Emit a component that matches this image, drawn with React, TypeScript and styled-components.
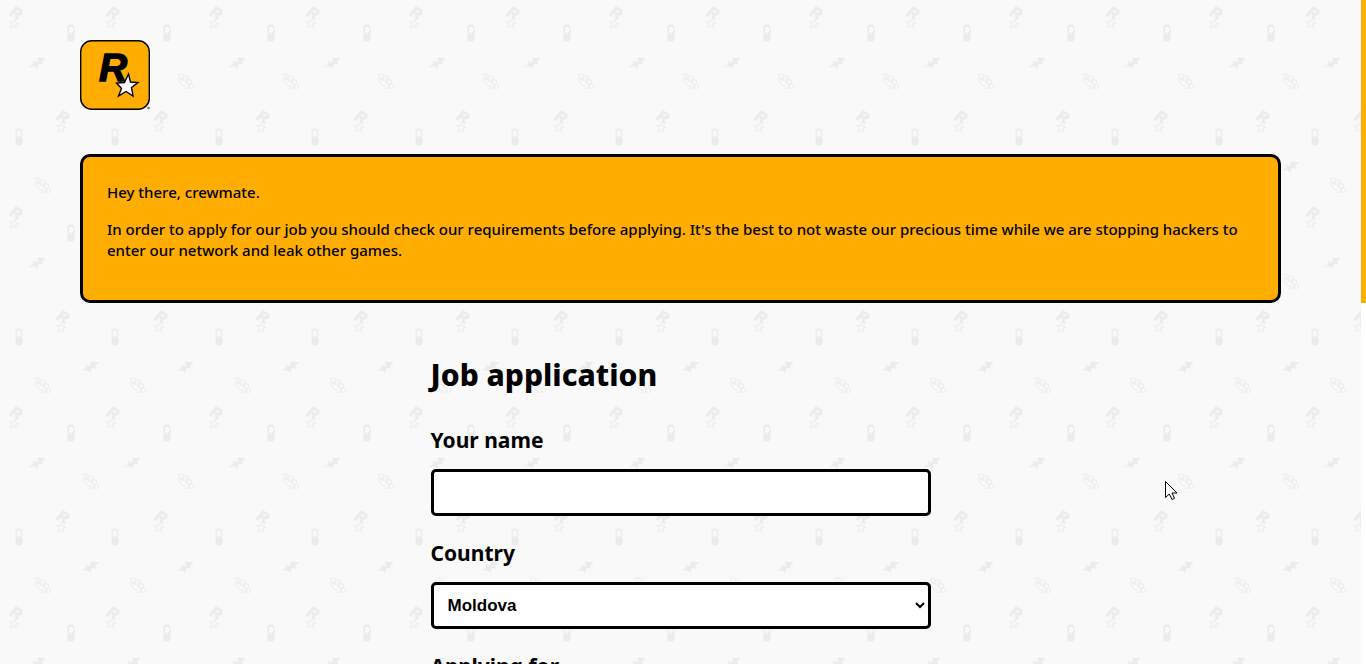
import React, { useId } from "react";
import styled, { createGlobalStyle, css } from "styled-components";

const GlobalStyle = createGlobalStyle`
  * { box-sizing: border-box; }
  body {
    margin: 0;
    background: #fff;
    color: #000;
    font-family: "Noto Sans", sans-serif;
    font-size: 15px;
    font-weight: 500;
    line-height: 21px;
  }
`;

const Shell = styled.div`
  display: grid;
  grid-template-columns: minmax(0, 1fr) 5px;
  height: 100vh;
`;

const Scroller = styled.div`
  overflow-y: auto;
  scrollbar-width: none;
  background: #f9f9f9;
`;

const Rail = styled.div`
  background: #fff;
`;

const Thumb = styled.div`
  height: 303px;
  background: #ffad00;
`;

const Page = styled.div`
  position: relative;
  isolation: isolate;
  padding: 40px 80px;
`;

const Backdrop = styled.svg`
  position: absolute;
  inset: 0;
  z-index: -1;
  width: 100%;
  height: 100%;
`;

const Header = styled.header`
  display: flex;
  padding-bottom: 43px;
`;

const LogoLink = styled.a`
  display: block;
  width: 71px;
  height: 71px;
`;

const Notice = styled.section`
  padding: 25px 24px 23px;
  border: 3px solid #000;
  border-radius: 10px;
  background: #ffad00;

  p { margin: 0 0 16px; }
`;

const Form = styled.form`
  display: flex;
  flex-direction: column;
  max-width: 500px;
  margin: 50px auto 0;
`;

const Title = styled.h1`
  margin: 0 0 28px;
  font-size: 30px;
  font-weight: 800;
  line-height: 44px;
`;

const Field = styled.div`
  display: flex;
  flex-direction: column;
  gap: 14px;
  margin-bottom: 22px;
`;

const Label = styled.label`
  font-size: 21px;
  font-weight: 700;
  line-height: 30px;
`;

const control = css`
  width: 100%;
  height: 47px;
  padding: 0 10px;
  border: 3px solid #000;
  border-radius: 5px;
  background: #fff;
  color: #000;
  font: 700 17px "Liberation Sans", Arial, sans-serif;
`;

const TextInput = styled.input`${control}`;
const Select = styled.select`${control}`;

const Pointer = styled.svg`
  position: absolute;
  left: 1165px;
  top: 481px;
  width: 13px;
  height: 20px;
`;

const STAR = "M0,-12 L2.8,-4 L12,-4 L4.5,1.5 L7.5,10.5 L0,5 L-7.5,10.5 L-4.5,1.5 L-12,-4 L-2.8,-4 Z";

type Spot = { x: number; y: number };
const letters: Spot[] = [{ x: 15, y: 17 }, { x: 112, y: 17 }, { x: 62, y: 121 }, { x: 160, y: 121 }];
const pills: Spot[] = [{ x: 71, y: 33 }, { x: 167, y: 33 }, { x: 19, y: 137 }, { x: 115, y: 137 }];
const bolts: Spot[] = [{ x: 37, y: 63 }, { x: 132, y: 63 }, { x: 90, y: 167 }, { x: 185, y: 167 }];
const knuckles: Spot[] = [{ x: 91, y: 81 }, { x: 186, y: 81 }, { x: 43, y: 185 }, { x: 138, y: 185 }];
const at = ({ x, y }: Spot) => `translate(${x} ${y})`;

function Doodles() {
  const id = useId();
  return (
    <Backdrop aria-hidden="true">
      <defs>
        <pattern id={id} width="200" height="200" patternUnits="userSpaceOnUse">
          {letters.map((s) => (
            <g key={`${s.x}-${s.y}`} transform={at(s)}>
              <text y="5" textAnchor="middle" transform="translate(1 -4) rotate(27)" fontFamily="Liberation Sans" fontWeight="700" fontStyle="italic" fontSize="15" fill="#ebebeb" stroke="#ebebeb">R</text>
              <path d={STAR} transform="translate(-1 7) rotate(10) scale(.4)" fill="#f9f9f9" stroke="#ebebeb" strokeWidth="2.2" />
            </g>
          ))}
          {pills.map((s) => (
            <g key={`${s.x}-${s.y}`} transform={at(s)}>
              <rect x="-3.5" y="-8.5" width="7" height="17" rx="3" fill="#ebebeb" />
              <rect x="-2" y="-6.5" width="4" height="6.5" rx="1.8" fill="#f9f9f9" />
            </g>
          ))}
          {bolts.map((s) => (
            <path key={`${s.x}-${s.y}`} transform={at(s)} d="M-9,4.5 L-3.5,0.5 L-5,-2 L0.500,-1 L0.500,-5.500 L9,-4.500 L4.500,-1 L6.500,1.500 L1.500,1 L0.500,5.500 L-3.500,3 Z" fill="#ebebeb" />
          ))}
          {knuckles.map((s) => (
            <g key={`${s.x}-${s.y}`} transform={at(s)} fill="none" stroke="#ebebeb">
              <circle cx="-5" cy="-5" r="2.3" />
              <circle cx="0" cy="-3" r="2.3" />
              <circle cx="3.5" cy="1" r="2.3" />
              <circle cx="5.5" cy="5.3" r="2.3" />
              <path d="M-7,-2.5 L-7,0 Q-5,5 0,6 L1,8 L3,6.5 Q2,3 -1,0 Q-4,-2 -7,-2.5 Z" />
            </g>
          ))}
        </pattern>
      </defs>
      <rect width="100%" height="100%" fill={`url(#${id})`} />
    </Backdrop>
  );
}

function Logo() {
  return (
    <svg width="71" height="71" viewBox="0 0 71 71" aria-hidden="true">
      <rect x="0.7" y="0.7" width="68.6" height="68.6" rx="11" fill="#ffad00" stroke="#000" strokeWidth="1.4" />
      <text x="19" y="41" fontFamily="Liberation Sans" fontSize="39" fontWeight="700" fontStyle="italic" stroke="#000" strokeWidth="1.4">R</text>
      <path d="M48.5,34 L50.5,42 L58,42.500 L51.500,47.500 L53,56 L46,51.500 L38.500,56 L41.500,48.500 L36.500,43 L44.500,42.500 Z" fill="#fff" stroke="#000" strokeWidth="1.4" />
      <circle cx="68.5" cy="68" r="1.3" fill="#777" />
    </svg>
  );
}

export default function App() {
  return (
    <>
      <GlobalStyle />
      <Shell>
        <Scroller>
          <Page>
            <Doodles />
            <Header>
              <LogoLink href="#" aria-label="Home"><Logo /></LogoLink>
            </Header>
            <main>
              <Notice>
                <p>Hey there, crewmate.</p>
                <p>In order to apply for our job you should check our requirements before applying. It's the best to not waste our precious time while we are stopping hackers to enter our network and leak other games.</p>
              </Notice>
              <Form>
                <Title>Job application</Title>
                <Field>
                  <Label htmlFor="name">Your name</Label>
                  <TextInput id="name" type="text" />
                </Field>
                <Field>
                  <Label htmlFor="country">Country</Label>
                  <Select id="country" defaultValue="Moldova"><option>Moldova</option></Select>
                </Field>
                <Field>
                  <Label htmlFor="role">Applying for</Label>
                  <Select id="role" />
                </Field>
              </Form>
            </main>
          </Page>
        </Scroller>
        <Rail aria-hidden="true"><Thumb /></Rail>
      </Shell>
      <Pointer viewBox="0 0 13 20" aria-hidden="true">
        <path d="M.5,.5 V16.5 L4.3,13 L7,18.5 L9.5,17.3 L7,12 H12 Z" fill="#fff" stroke="#000" />
      </Pointer>
    </>
  );
}
